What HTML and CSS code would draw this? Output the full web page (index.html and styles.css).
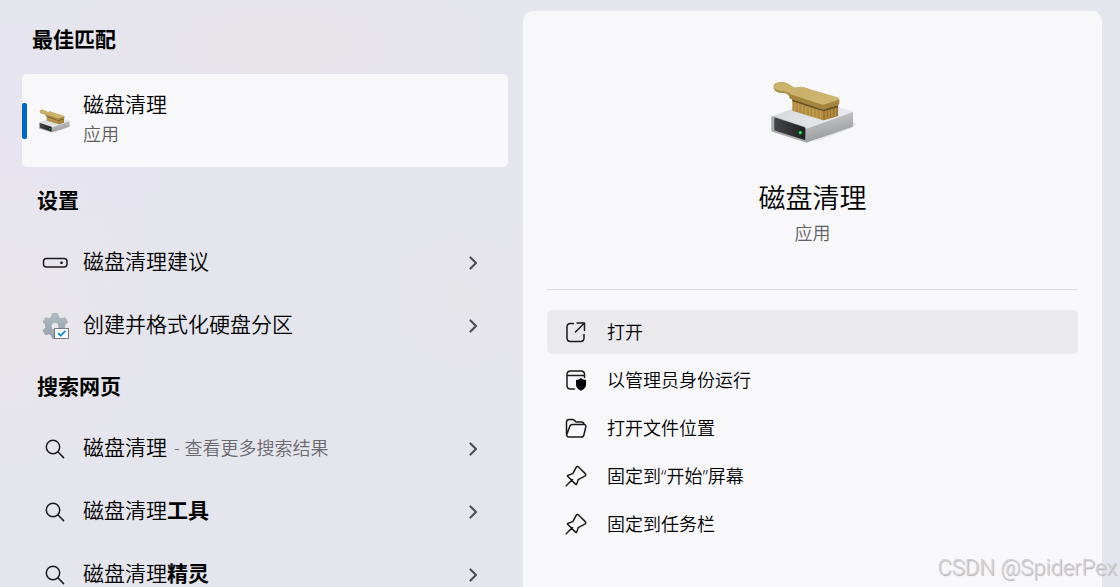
FILE: index.html
```html
<!DOCTYPE html>
<html lang="zh-CN">
<head>
<meta charset="utf-8">
<meta name="viewport" content="width=device-width, initial-scale=1">
<title>磁盘清理</title>
<link rel="stylesheet" href="styles.css">
</head>
<body>
<svg class="sprites" aria-hidden="true">
  <defs>
    <linearGradient id="side" x1="0" y1="0" x2="0.3" y2="1"><stop offset="0" stop-color="#cfcfd0"/><stop offset="1" stop-color="#98999b"/></linearGradient>
    <linearGradient id="lid" x1="0" y1="0" x2="1" y2="0.5"><stop offset="0" stop-color="#d4d5d9"/><stop offset="1" stop-color="#e9eaee"/></linearGradient>
    <linearGradient id="slot" x1="0" y1="0" x2="1" y2="0"><stop offset="0" stop-color="#454647"/><stop offset="1" stop-color="#1f2021"/></linearGradient>
    <linearGradient id="wood" x1="0" y1="0" x2="1" y2="1"><stop offset="0" stop-color="#c9b06a"/><stop offset="1" stop-color="#cfb872"/></linearGradient>
    <linearGradient id="gear" x1="0" y1="0" x2="0" y2="1"><stop offset="0" stop-color="#b0bac2"/><stop offset="1" stop-color="#93a0aa"/></linearGradient>
  </defs>
  <symbol id="cleanup" viewBox="87 60 264 192">
    <path d="M220 243 338 186l12 6-16 13-110 40z" fill="#e3e4e7"/>
    <path d="M94 173q0-3 4-5l125-46q8-3 16 0l96 31q4 2 2 5L200 210z" fill="url(#lid)"/>
    <path d="M198 207 339 156v42q0 2-3 3L198 248z" fill="url(#side)"/>
    <path d="M94 171q1-4 6-2l95 31q5 2 5 7v41L97 215q-3-1-3-4z" fill="#aaabad"/>
    <path d="M103 176q0-4 4-3l84 28q5 2 5 6v34l-90-29q-3-1-3-4z" fill="url(#slot)"/>
    <circle cx="181" cy="218" r="6" fill="#15752a"/><circle cx="181" cy="218" r="4" fill="#32ed55"/>
    <path d="M157 116v36l93 29 44-13v-34z" fill="#b18d43"/>
    <path d="M250 150v31l44-13v-34z" fill="#9c7532"/>
    <path d="M165 126v28M176 129v29M187 132v29M198 136v29M209 139v30M220 142v30M231 145v30M242 149v29M258 153v26M267 151v26M276 148v25M286 145v25" stroke="#c4a053" stroke-width="3"/>
    <path d="M157 118 250 149l44-13v6l-44 12-93-30z" fill="#665124"/>
    <path d="M101 80c-1-11 15-15 30-13 16 2 23 15 36 16l15-3 24 7-20 31-37-7c-6-9-11-12-23-12-13 0-25-6-25-19z" fill="#ad924b"/>
    <path d="M101 77c1-9 17-12 30-10 16 2 23 15 36 16l17-3 24 7-20 26-33-11c-7-4-17-9-28-10-14-1-26-5-26-15z" fill="url(#wood)"/>
    <path d="M148 98v15q0 3 4 4l93 29q6 2 11 0l38-11q4-1 4-4v-14l-46 8z" fill="#a3853f"/>
    <path d="M149 95q2-3 31-13 5-2 10 0l103 30q9 4 1 8l-39 13q-6 2-12 0l-91-30q-6-3-3-8z" fill="url(#wood)"/>
  </symbol>
  <symbol id="chevron" viewBox="0 0 12 16"><path d="M3.500 2.500 9 8 3.500 13.500" fill="none" stroke="#505054" stroke-width="2.200" stroke-linecap="round" stroke-linejoin="round"/></symbol>
  <symbol id="search" viewBox="0 0 20 20"><circle cx="8" cy="8" r="6.700"/><path d="M12.800 12.800 18.600 18.600"/></symbol>
  <symbol id="pin" viewBox="0 0 22 22"><path d="M1.200 20.800 7.500 14.500M2.600 11.300 10.700 19.400Q11.400 19.800 11.800 18.900L13.200 14.700 19.800 11.100Q21.500 10 20.200 8.600L13.600 2Q12.200.700 11.200 2.300L7.800 8.600 3.200 10.200Q2.100 10.600 2.600 11.300z"/></symbol>
</svg>

<main class="shell">
  <section class="results" aria-label="搜索结果">
    <h2 class="heading heading-best">最佳匹配</h2>
    <button class="best" type="button">
      <svg class="best-icon" aria-hidden="true"><use href="#cleanup"/></svg>
      <span class="best-text"><span class="best-name">磁盘清理</span><span class="best-kind">应用</span></span>
    </button>

    <h2 class="heading heading-settings">设置</h2>
    <ul class="list">
      <li><button class="row" type="button">
        <span class="row-icon"><svg class="line drive" width="26" height="12" viewBox="0 0 26 12" aria-hidden="true"><rect x="1.500" y="1.500" width="23.500" height="8.500" rx="3"/><circle class="dot" cx="19.500" cy="5.800" r="1.300"/></svg></span>
        <span class="row-label">磁盘清理建议</span>
        <svg class="chevron" aria-hidden="true"><use href="#chevron"/></svg>
      </button></li>
      <li><button class="row" type="button">
        <span class="row-icon"><svg width="28" height="28" viewBox="-1 0 28 28" aria-hidden="true">
          <path fill="url(#gear)" stroke="url(#gear)" stroke-linejoin="round" fill-rule="evenodd" d="M10.500 1.500h5l1.200 3.900 2.300 1.300 4-1 2.500 4.300-2.800 3v2.400l2.800 3-2.500 4.300-4-1-2.300 1.300-1.200 3.500h-5L9.300 23 7 21.700l-3.500 1L1 18.400l2.800-3V13L1 10l2.500-4.300 3.500 1 2.300-1.300zM13 10.200a4 4 0 1 0 0 8 4 4 0 0 0 0-8z"/>
          <rect x="12.500" y="16.500" width="14" height="10" fill="#fff" stroke="#777b7f"/>
          <path d="M16 21.200 18.600 23.700 23.500 18.800" fill="none" stroke="#1787d8" stroke-width="1.800"/>
        </svg></span>
        <span class="row-label">创建并格式化硬盘分区</span>
        <svg class="chevron" aria-hidden="true"><use href="#chevron"/></svg>
      </button></li>
    </ul>

    <h2 class="heading heading-web">搜索网页</h2>
    <ul class="list">
      <li><button class="row" type="button">
        <span class="row-icon"><svg class="line search" aria-hidden="true"><use href="#search"/></svg></span>
        <span class="row-label">磁盘清理<span class="hint">- 查看更多搜索结果</span></span>
        <svg class="chevron" aria-hidden="true"><use href="#chevron"/></svg>
      </button></li>
      <li><button class="row" type="button">
        <span class="row-icon"><svg class="line search" aria-hidden="true"><use href="#search"/></svg></span>
        <span class="row-label">磁盘清理<b>工具</b></span>
        <svg class="chevron" aria-hidden="true"><use href="#chevron"/></svg>
      </button></li>
      <li><button class="row" type="button">
        <span class="row-icon"><svg class="line search" aria-hidden="true"><use href="#search"/></svg></span>
        <span class="row-label">磁盘清理<b>精灵</b></span>
        <svg class="chevron" aria-hidden="true"><use href="#chevron"/></svg>
      </button></li>
    </ul>
  </section>

  <section class="detail" aria-label="磁盘清理">
    <header class="hero">
      <svg class="hero-icon" aria-hidden="true"><use href="#cleanup"/></svg>
      <h1 class="hero-name">磁盘清理</h1>
      <p class="hero-kind">应用</p>
    </header>
    <ul class="actions">
      <li><button class="action action-active" type="button">
        <svg class="line" width="22" height="22" viewBox="0 0 22 22" aria-hidden="true"><path d="M8.500 2.500H5.500Q2 2.500 2 6V17Q2 20.500 5.500 20.500H15.500Q19 20.500 19 17V13.500M12 2H19.500V9.500M19.500 2 10.500 11"/></svg>
        <span class="action-label">打开</span>
      </button></li>
      <li><button class="action" type="button">
        <svg class="line" width="22" height="22" viewBox="0 0 22 22" aria-hidden="true"><path d="M9.500 20H5.500Q2 20 2 16.500V5.500Q2 2 5.500 2H16Q19.500 2 19.500 5.500V8.500M2 6.500H19.500"/><path class="solid" d="M16 9Q18 10.800 21 11V15.500Q21 19.500 16 21.800 11 19.500 11 15.500V11Q14 10.800 16 9z"/></svg>
        <span class="action-label">以管理员身份运行</span>
      </button></li>
      <li><button class="action" type="button">
        <svg class="line" width="22" height="22" viewBox="0 0 22 22" aria-hidden="true"><path d="M1.500 18V5Q1.500 2.500 4.500 2.500H7.500Q8.500 2.500 9.300 3.400L11 5H16Q19 5 19 7.500M4 20H16.500Q18.500 20 19 17.500L20.800 10Q21 7.500 19 7.500H7.500Q5.200 7.500 4.600 9.700L1.800 17.500Q1.500 20 4 20z"/></svg>
        <span class="action-label">打开文件位置</span>
      </button></li>
      <li><button class="action" type="button">
        <svg class="line" width="22" height="22" aria-hidden="true"><use href="#pin"/></svg>
        <span class="action-label">固定到“开始”屏幕</span>
      </button></li>
      <li><button class="action" type="button">
        <svg class="line" width="22" height="22" aria-hidden="true"><use href="#pin"/></svg>
        <span class="action-label">固定到任务栏</span>
      </button></li>
    </ul>
  </section>
</main>
<p class="watermark">CSDN @SpiderPex</p>
</body>
</html>
```
FILE: styles.css
```css
* {
  box-sizing: border-box;
}

body {
  margin: 0;
  overflow: hidden;
  color: #000;
  font-family: "Open Sans", "Noto Sans CJK SC DemiLight", "Noto Sans CJK SC", sans-serif;
  font-size: 18px;
  font-weight: 350;
  background:
    radial-gradient(circle at 0 320px, #e9e6ea 0, transparent 180px),
    radial-gradient(ellipse 240px 90px at 280px 45px, #e8e4e9 0, transparent 100%),
    radial-gradient(circle at 460px 300px, #e6e5ea 0, transparent 130px),
    radial-gradient(circle at 20px 160px, #e7e4f0 0, transparent 160px),
    #e5e5ee;
}

h1,
h2,
p,
ul {
  margin: 0;
  padding: 0;
}

ul {
  list-style: none;
}

button {
  border: 0;
  background: none;
  color: inherit;
  font: inherit;
  text-align: left;
}

b {
  font-family: "Open Sans", "Noto Sans CJK SC", sans-serif;
  font-weight: 700;
}

.sprites {
  position: absolute;
  width: 0;
  height: 0;
}

.line {
  fill: none;
  stroke: #1b1b1d;
  stroke-width: 1.5;
  stroke-linecap: round;
  stroke-linejoin: round;
}

.dot,
.solid {
  fill: #000;
  stroke: none;
}

.shell {
  display: grid;
  grid-template-columns: minmax(0, 486fr) minmax(0, 579fr);
  gap: 15px;
  height: 100vh;
  padding: 0 18px 0 22px;
}

.results {
  padding-top: 25px;
}

.heading {
  padding-left: 15px;
  font-family: "Open Sans", "Noto Sans CJK SC", sans-serif;
  font-size: 21px;
  line-height: 28px;
  font-weight: 700;
}

.heading-best {
  padding-left: 10px;
  margin-bottom: 21px;
}

.heading-settings {
  margin: 19px 0 17px;
}

.heading-web {
  margin: 15px 0 17px;
}

.best {
  position: relative;
  display: flex;
  align-items: center;
  gap: 12px;
  width: 100%;
  padding: 15px 16px 18px;
  border-radius: 5px;
  background: #f8f8fb;
}

.best::before {
  content: "";
  position: absolute;
  left: 0;
  top: 29px;
  width: 5px;
  height: 36px;
  border-radius: 2px;
  background: #0067c0;
}

.best-icon {
  width: 33px;
  height: 28px;
  padding-top: 4px;
}

.best-text {
  display: grid;
}

.best-name {
  font-size: 21px;
  line-height: 30px;
}

.best-kind {
  color: #606063;
  line-height: 30px;
}

.row {
  display: grid;
  grid-template-columns: 28px 1fr 12px;
  align-items: center;
  gap: 14px;
  width: 100%;
  height: 63px;
  padding: 0 29px 0 19px;
  font-size: 21px;
  line-height: 32px;
}

.row-label {
  padding-bottom: 3px;
}

.row-icon {
  display: grid;
  place-items: center;
}

.search {
  width: 20px;
  height: 20px;
}

.hint {
  padding-left: 7px;
  color: #6a6a6f;
  font-size: 18px;
  line-height: 24px;
}

.chevron {
  width: 12px;
  height: 16px;
}

.detail {
  margin-top: 11px;
  padding: 0 24px;
  border-radius: 10px 10px 0 0;
  background: #f8f8fb;
}

.hero {
  display: grid;
  justify-items: center;
  padding: 69px 0 40px;
  border-bottom: 1px solid #dfdfe2;
}

.hero-icon {
  width: 88px;
  height: 64px;
}

.hero-name {
  margin-top: 34px;
  font-size: 27px;
  line-height: 40px;
  font-weight: inherit;
}

.hero-kind {
  color: #606063;
  line-height: 31px;
}

.actions {
  display: grid;
  gap: 4px;
  padding-top: 20px;
}

.action {
  display: flex;
  align-items: center;
  gap: 20px;
  width: 100%;
  height: 44px;
  padding: 0 18px;
  border-radius: 5px;
}

.action-label {
  padding-bottom: 2px;
}

.action-active {
  background: #eaeaec;
}

.watermark {
  position: absolute;
  right: 3px;
  bottom: 7px;
  color: #d2d2d5;
  font: 300 22px/24px Roboto, "Liberation Sans", sans-serif;
  text-shadow: 1px 1px 1px #b0b0b4;
}
```
